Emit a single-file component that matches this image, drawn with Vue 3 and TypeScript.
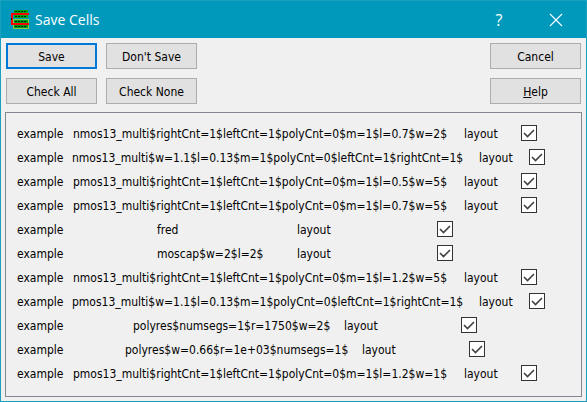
<script setup lang="ts">
import { ref } from 'vue'

type Spread = 'long' | 'widest' | 'short' | 'medium' | 'wide'

interface Cell {
  library: string
  name: string
  view: string
  spread: Spread
  checked: boolean
}

const makeCell = (name: string, spread: Spread): Cell => ({
  library: 'example',
  name,
  view: 'layout',
  spread,
  checked: true,
})

const cells = ref<Cell[]>([
  makeCell('nmos13_multi$rightCnt=1$leftCnt=1$polyCnt=0$m=1$l=0.7$w=2$', 'long'),
  makeCell('nmos13_multi$w=1.1$l=0.13$m=1$polyCnt=0$leftCnt=1$rightCnt=1$', 'widest'),
  makeCell('pmos13_multi$rightCnt=1$leftCnt=1$polyCnt=0$m=1$l=0.5$w=5$', 'long'),
  makeCell('pmos13_multi$rightCnt=1$leftCnt=1$polyCnt=0$m=1$l=0.7$w=5$', 'long'),
  makeCell('fred', 'short'),
  makeCell('moscap$w=2$l=2$', 'short'),
  makeCell('nmos13_multi$rightCnt=1$leftCnt=1$polyCnt=0$m=1$l=1.2$w=5$', 'long'),
  makeCell('pmos13_multi$w=1.1$l=0.13$m=1$polyCnt=0$leftCnt=1$rightCnt=1$', 'widest'),
  makeCell('polyres$numsegs=1$r=1750$w=2$', 'medium'),
  makeCell('polyres$w=0.66$r=1e+03$numsegs=1$', 'wide'),
  makeCell('pmos13_multi$rightCnt=1$leftCnt=1$polyCnt=0$m=1$l=1.2$w=1$', 'long'),
])

function setAll(value: boolean): void {
  cells.value.forEach((cell) => {
    cell.checked = value
  })
}
</script>

<template>
  <main class="window">
    <header class="titlebar">
      <svg class="logo" width="19" height="20" viewBox="0 0 19 20" shape-rendering="crispEdges" aria-hidden="true">
        <rect x="3" y="0" width="14" height="8" fill="#00a818" />
        <path d="M4 1.5H16M4 6.5H16" stroke="#062a08" stroke-width="1" stroke-dasharray="2 1" />
        <rect x="2" y="9" width="16" height="10" fill="#7fd04a" />
        <rect x="3" y="10" width="14" height="8" fill="#00981a" />
        <path d="M4 11.5H16M4 16.5H16" stroke="#062a08" stroke-width="1" stroke-dasharray="2 1" />
        <path d="M18 4H1V14H18" fill="none" stroke="#f00" stroke-width="2" />
        <rect x="0" y="8" width="1" height="2" fill="#400" />
      </svg>
      <h1 class="title">Save Cells</h1>
      <button class="caption" type="button">?</button>
      <button class="caption close" type="button" aria-label="Close">
        <svg width="14" height="14" viewBox="0 0 14 14" aria-hidden="true">
          <path d="M1 1L13 13M13 1L1 13" stroke="#fff" stroke-width="1.1" />
        </svg>
      </button>
    </header>

    <div class="actions">
      <button class="button primary" type="button">Save</button>
      <button class="button" type="button">Don't Save</button>
      <button class="button end" type="button">Cancel</button>
      <button class="button" type="button" @click="setAll(true)">Check All</button>
      <button class="button" type="button" @click="setAll(false)">Check None</button>
      <button class="button end" type="button"><u>H</u>elp</button>
    </div>

    <section class="panel">
      <table class="cells">
        <tbody>
          <tr v-for="(cell, i) in cells" :key="i" class="row" :class="cell.spread">
            <td class="text">{{ cell.library }}</td>
            <td class="text"><label :for="`cell-${i}`">{{ cell.name }}</label></td>
            <td class="text">{{ cell.view }}</td>
            <td class="tick">
              <input :id="`cell-${i}`" v-model="cell.checked" class="checkbox" type="checkbox" />
              <svg v-if="cell.checked" class="mark" width="16" height="16" viewBox="0 0 16 16" aria-hidden="true">
                <path d="M3 8L6.5 11.5L13 5" fill="none" stroke="#404040" stroke-width="1.6" />
              </svg>
            </td>
          </tr>
        </tbody>
      </table>
    </section>
  </main>
</template>

<style>
body {
  margin: 0;
}
</style>

<style scoped>
.window {
  box-sizing: border-box;
  display: flex;
  flex-direction: column;
  min-height: 100vh;
  border: 1px solid #1a9fbf;
  background: #f0f0f0;
  color: #000;
  font-family: "DejaVu Sans Condensed", "Noto Sans", sans-serif;
  font-size: 12px;
  line-height: 16px;
}

.titlebar {
  display: flex;
  align-items: center;
  height: 37px;
  padding-left: 10px;
  background: #0099bc;
  color: #fff;
  font-family: "Open Sans", sans-serif;
}

.title {
  flex: 1;
  margin: 0 0 0 5px;
  font-size: 14px;
  font-weight: 400;
  line-height: 20px;
}

.caption {
  display: flex;
  align-items: center;
  justify-content: center;
  width: 54px;
  height: 37px;
  padding: 0;
  border: 0;
  background: transparent;
  color: #fff;
  font: 16px/20px "Open Sans", sans-serif;
}

.close {
  width: 60px;
}

.actions {
  display: grid;
  grid-template-columns: 91px 91px 1fr;
  gap: 9px;
  padding: 5px 5px 8px;
}

.button {
  height: 26px;
  padding: 2px 0 0;
  border: 1px solid #adadad;
  background: #e1e1e1;
  color: #000;
  font: inherit;
}

.primary {
  border: 2px solid #0078d7;
}

.end {
  justify-self: end;
  width: 91px;
}

.panel {
  flex: 1;
  margin: 0 4px 4px;
  padding: 8px 11px 11px;
  border: 1px solid #828790;
}

.cells,
.cells tbody {
  display: block;
}

.row {
  display: grid;
  align-items: center;
  height: 24px;
  white-space: nowrap;
}

.row td {
  padding: 0;
}

.row .text {
  padding-top: 2px;
}

.long {
  grid-template-columns: 56px 391px 57px 16px;
}

.widest {
  grid-template-columns: 55px 407px 50px 16px;
}

.short {
  grid-template-columns: 140px 140px 140px 16px;
}

.medium {
  grid-template-columns: 116px 211px 117px 16px;
}

.wide {
  grid-template-columns: 108px 237px 107px 16px;
}

.tick {
  display: grid;
}

.checkbox,
.mark {
  grid-area: 1 / 1;
}

.checkbox {
  appearance: none;
  box-sizing: border-box;
  width: 16px;
  height: 16px;
  margin: 0;
  border: 1px solid #333;
  background: #fff;
}

.mark {
  pointer-events: none;
}
</style>
